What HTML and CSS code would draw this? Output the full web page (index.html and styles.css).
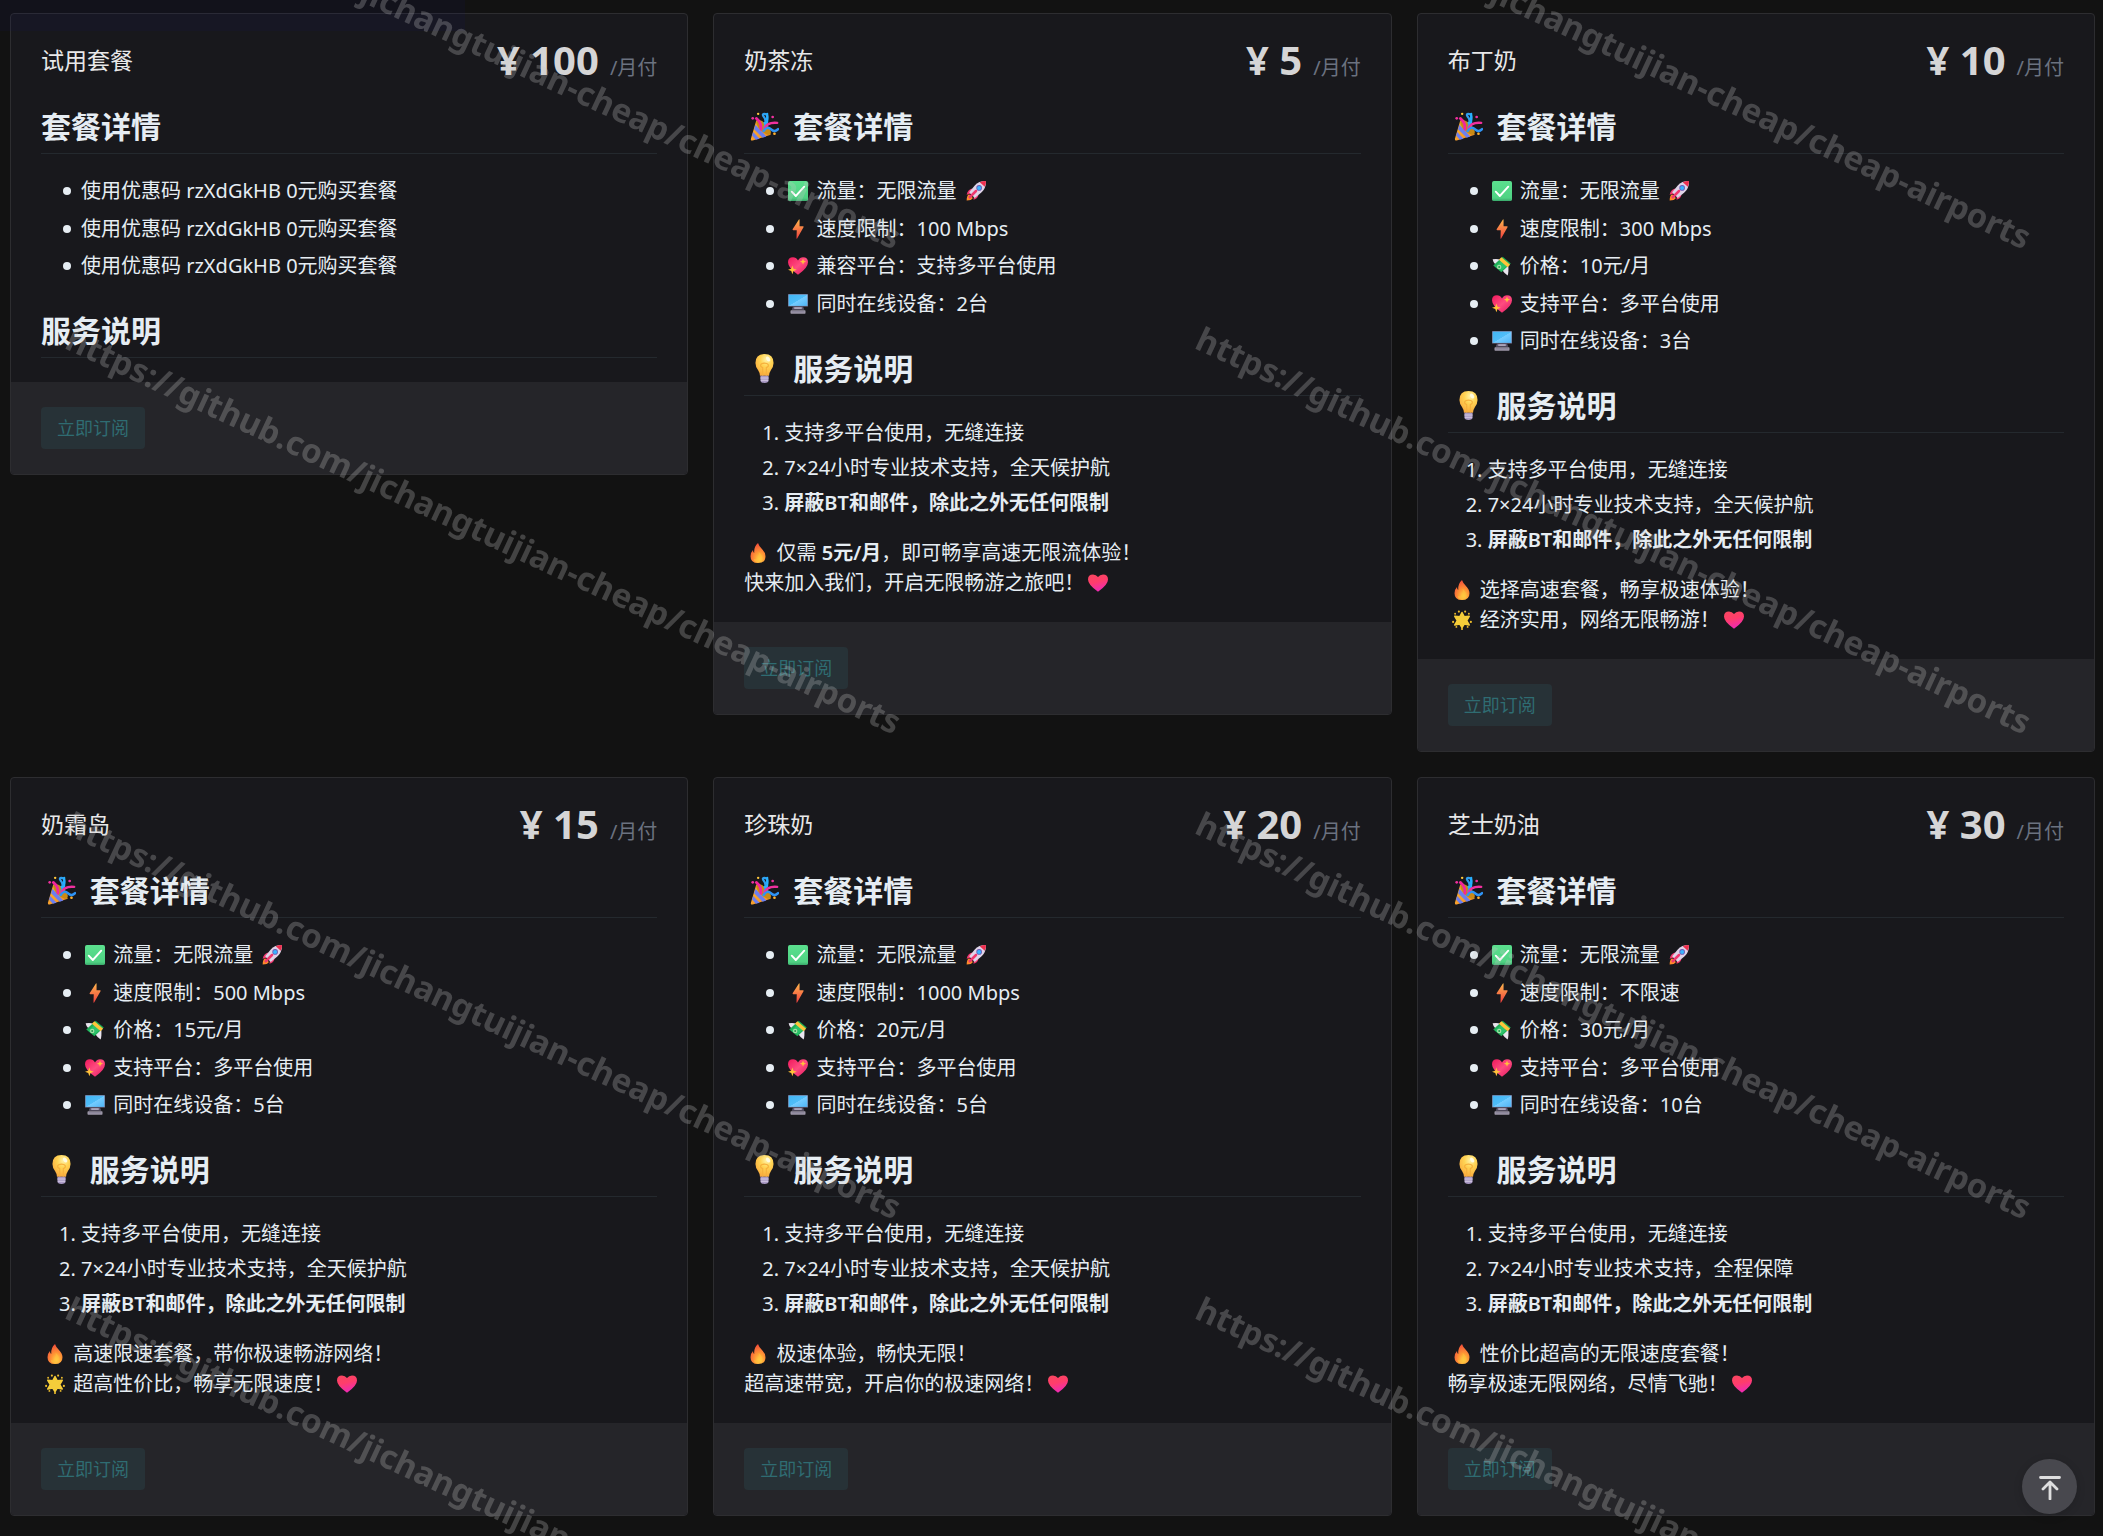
FILE: index.html
```html
<!DOCTYPE html>
<html lang="zh-CN">
<head>
<meta charset="utf-8">
<meta name="viewport" content="width=device-width, initial-scale=1">
<title>购买订阅</title>
<link rel="stylesheet" href="styles.css">
</head>
<body>
<svg class="sprite" aria-hidden="true">
  <defs>
    <linearGradient id="g-check" x1="0" y1="0" x2="0" y2="1"><stop offset="0" stop-color="#5be08e"/><stop offset=".85" stop-color="#4fd283"/><stop offset="1" stop-color="#3aa86b"/></linearGradient>
    <linearGradient id="g-bolt" x1="0" y1="0" x2="0" y2="1"><stop offset="0" stop-color="#ffb84d"/><stop offset="1" stop-color="#f03e3e"/></linearGradient>
    <linearGradient id="g-heart" x1="0" y1="0" x2=".3" y2="1"><stop offset="0" stop-color="#f8475f"/><stop offset=".5" stop-color="#ff3d6b"/><stop offset="1" stop-color="#f02bb0"/></linearGradient>
    <linearGradient id="g-spark" x1="0" y1="0" x2="1" y2="1"><stop offset="0" stop-color="#f0185c"/><stop offset=".5" stop-color="#ff4c80"/><stop offset="1" stop-color="#e01560"/></linearGradient>
    <linearGradient id="g-screen" x1="0" y1="0" x2="1" y2="1"><stop offset="0" stop-color="#41b6f5"/><stop offset=".5" stop-color="#50bdf8"/><stop offset=".52" stop-color="#74ccff"/><stop offset="1" stop-color="#4fb4f5"/></linearGradient>
    <radialGradient id="g-bulb" cx=".6" cy=".25" r=".8"><stop offset="0" stop-color="#fff3a8"/><stop offset=".4" stop-color="#ffd454"/><stop offset="1" stop-color="#f9a63a"/></radialGradient>
    <radialGradient id="g-fire" cx=".6" cy=".8" r=".8"><stop offset="0" stop-color="#ffd84a"/><stop offset=".4" stop-color="#ff9a35"/><stop offset="1" stop-color="#f1493a"/></radialGradient>
    <linearGradient id="g-cone" x1="0" y1="0" x2="1" y2="1"><stop offset="0" stop-color="#ffb52e"/><stop offset="1" stop-color="#f08a2a"/></linearGradient>
  </defs>
  <symbol id="i-party" viewBox="0 0 32 32">
    <path d="M7 9 23 25 3 31.500Q.5 32 1 29.500Z" fill="url(#g-cone)"/>
    <path d="m6 14 12 13-4 1.500L4.500 19zM3.500 22l7 7.500-4 1.200L2.300 26z" fill="#6b7ff0"/>
    <ellipse cx="15" cy="17" rx="10.500" ry="4.500" transform="rotate(45 15 17)" fill="#c98a16"/>
    <path d="M16 17Q19 9 15 5q-2-3 1-3 4 0 3 6" fill="none" stroke="#2fa0f0" stroke-width="2.500" stroke-linecap="round"/>
    <path d="M19 2v8q0 3-3 2" fill="none" stroke="#27b0ff" stroke-width="2.400" stroke-linecap="round"/>
    <path d="M12 19Q13 12 7 7" fill="none" stroke="#f2249c" stroke-width="3" stroke-linecap="round"/>
    <path d="M16 18q3-7 14-6" fill="none" stroke="#f0309f" stroke-width="2.600" stroke-linecap="round"/>
    <path d="M15 21q4-6 8-2t8 0" fill="none" stroke="#2f93f4" stroke-width="2.800" stroke-linecap="round"/>
    <circle cx="3" cy="7" r="1.500" fill="#f0309f"/><circle cx="9" cy="2" r="1.300" fill="#ffc83d"/><circle cx="25" cy="5.500" r="1.500" fill="#f0309f"/><circle cx="27" cy="24" r="1.500" fill="#ffb02e"/>
  </symbol>
  <symbol id="i-check" viewBox="0 0 32 32">
    <rect width="32" height="32" rx="3" fill="url(#g-check)"/>
    <path d="m6 17 6.500 7L26 9" fill="none" stroke="#fff" stroke-width="3" stroke-linecap="round" stroke-linejoin="round"/>
  </symbol>
  <symbol id="i-rocket" viewBox="0 0 32 32">
    <path d="M1 31q0-8 4-10l6 6q-2 4-10 4z" fill="#ff8a2b"/>
    <path d="M10 12q-7 1-9 10l7-2zM20 22q-1 6-8 8l1-8z" fill="#f0386f"/>
    <path d="M32 0q0 12-7 18l-11 9-9-9 9-11Q20 0 32 0z" fill="#dfd3e8"/>
    <path d="M32 0q0 5-2 9l-8-7q4-2 10-2z" fill="#ef2f4f"/>
    <circle cx="21" cy="11" r="4.500" fill="#6b5bb5"/><circle cx="21" cy="11" r="3.200" fill="#38b4ff"/>
    <path d="m6 26 10-10" stroke="#f0386f" stroke-width="4" stroke-linecap="round"/>
  </symbol>
  <symbol id="i-bolt" viewBox="0 0 32 32">
    <path d="M17.500.8q1-1.200 1 .8v10H24q1.600.2.800 1.600L14.600 31.200q-1.200 1.200-1-.8L14 18H8.500Q6.800 17.800 7.600 16z" fill="url(#g-bolt)"/>
  </symbol>
  <symbol id="i-sparkheart" viewBox="0 0 32 32">
    <path d="M16 30Q0 19 0 10 0 2 8 2q5 0 8 5 3-5 8-5 8 0 8 8 0 9-16 20z" fill="url(#g-spark)"/>
    <path d="m7 15 1.800 5.200L14 22l-5.200 1.800L7 29l-1.800-5.200L0 22l5.200-1.800zM24 4l1.400 3.600L29 9l-3.600 1.400L24 14l-1.400-3.600L19 9l3.600-1.400z" fill="#ffc23a"/>
  </symbol>
  <symbol id="i-money" viewBox="0 0 32 32">
    <path d="M1 5q9-1 12 1l-3 8Q3 14 1 5z" fill="#e9e4ee"/>
    <path d="M26 14q1 12-1 17-6-4-9-9z" fill="#e9e4ee"/>
    <path d="M2 15 17 1l13 11-15 14z" fill="#1fae57"/><path d="m5 17 13-12 9 8-12 10z" fill="#2cc36b"/>
    <circle cx="11.500" cy="17.500" r="3.500" fill="#a8e0a8"/><circle cx="11.500" cy="17.500" r="1.600" fill="#1f9a4e"/>
    <path d="m11 6 4-4 14 12-4 4z" fill="#ffc43a"/>
  </symbol>
  <symbol id="i-desktop" viewBox="0 0 32 32">
    <rect x="0" y="0" width="32" height="20" rx="1" fill="#7a6f8c"/><rect x="1" y="1" width="30" height="18" fill="url(#g-screen)"/>
    <path d="M8 20h16l2 5H6z" fill="#5f5870"/><path d="M10 21h12v3H10z" fill="#aaa3b8"/>
    <rect x="4" y="26" width="24" height="5.500" rx="1" fill="#9d97a8"/><path d="M6 28.500h20" stroke="#77708a" stroke-width="1"/>
  </symbol>
  <symbol id="i-bulb" viewBox="0 0 32 32">
    <path d="M16 0q10 0 10 10 0 4-3 8-2 3-2 6H11q0-3-2-6-3-4-3-8Q6 0 16 0z" fill="url(#g-bulb)"/>
    <path d="M14 24v-9q-3-1-2-3.500 1-1.500 4-1.500t4 1.500q1 2.500-2 3.500v9" fill="none" stroke="#f6b03c" stroke-width="1.300"/>
    <path d="M11.500 24h9v5q0 3-4.500 3t-4.500-3z" fill="#a999c4"/><path d="M11.500 26.500h9M12 29h8" stroke="#d9cfe8" stroke-width="1"/>
    <ellipse cx="20" cy="5.500" rx="2" ry="3" transform="rotate(-35 20 5.500)" fill="#fffbe0"/>
  </symbol>
  <symbol id="i-fire" viewBox="0 0 32 32">
    <path d="M16 0q1 4 6 9 6 6 6 12 0 11-12 11T4 21q0-6 4-10 0 4 2 5Q9 6 16 0z" fill="url(#g-fire)"/>
    <path d="M17 14q6 6 6 11 0 6-7 6-6 0-7-6 3 2 5 0 4-4 3-11z" fill="#ffc23c" opacity=".6"/>
  </symbol>
  <symbol id="i-star" viewBox="0 0 32 32">
    <path d="m16 4 3.500 7 8-1-4 7 4 7-8-1.500L16 28l-3.500-5.500-8 1.500 4-7-4-7 8 1z" fill="#f5cd3a" stroke="#f5cd3a" stroke-width="2.500" stroke-linejoin="round"/>
    <g fill="#eebd2c"><circle cx="11" cy="2.500" r="1.700"/><circle cx="21" cy="2.500" r="1.700"/><circle cx="1.800" cy="19" r="1.700"/><circle cx="30.200" cy="19" r="1.700"/><circle cx="16" cy="30.300" r="1.700"/><circle cx="5" cy="6" r="1.500"/><circle cx="27" cy="6" r="1.500"/><circle cx="7" cy="27" r="1.500"/><circle cx="25" cy="27" r="1.500"/></g>
  </symbol>
  <symbol id="i-heart" viewBox="0 0 32 32">
    <path d="M16 30Q0 19 0 10.500 0 2.500 8 2.500q5 0 8 4 3-4 8-4 8 0 8 8Q32 19 16 30z" fill="url(#g-heart)"/>
  </symbol>
</svg>

<main class="plans">
  <article class="card">
    <header class="card-head"><span class="name">试用套餐</span><div class="cost"><strong class="price">¥ 100</strong><span class="period">/月付</span></div></header>
    <section class="detail">
      <h2>套餐详情</h2>
      <ul>
        <li>使用优惠码 rzXdGkHB 0元购买套餐</li>
        <li>使用优惠码 rzXdGkHB 0元购买套餐</li>
        <li>使用优惠码 rzXdGkHB 0元购买套餐</li>
      </ul>
      <h2>服务说明</h2>
    </section>
    <footer class="card-foot"><button class="buy" type="button" disabled>立即订阅</button></footer>
  </article>

  <article class="card">
    <header class="card-head"><span class="name">奶茶冻</span><div class="cost"><strong class="price">¥ 5</strong><span class="period">/月付</span></div></header>
    <section class="detail">
      <h2><svg class="emoji"><use href="#i-party"/></svg> 套餐详情</h2>
      <ul>
        <li><svg class="emoji"><use href="#i-check"/></svg> 流量：无限流量 <svg class="emoji"><use href="#i-rocket"/></svg></li>
        <li><svg class="emoji"><use href="#i-bolt"/></svg> 速度限制：100 Mbps</li>
        <li><svg class="emoji"><use href="#i-sparkheart"/></svg> 兼容平台：支持多平台使用</li>
        <li><svg class="emoji"><use href="#i-desktop"/></svg> 同时在线设备：2台</li>
      </ul>
      <h2><svg class="emoji"><use href="#i-bulb"/></svg> 服务说明</h2>
      <ol>
        <li>支持多平台使用，无缝连接</li>
        <li>7×24小时专业技术支持，全天候护航</li>
        <li><strong>屏蔽BT和邮件，除此之外无任何限制</strong></li>
      </ol>
      <p><svg class="emoji"><use href="#i-fire"/></svg> 仅需 <strong>5元/月</strong>，即可畅享高速无限流体验！<br>快来加入我们，开启无限畅游之旅吧！<svg class="emoji"><use href="#i-heart"/></svg></p>
    </section>
    <footer class="card-foot"><button class="buy" type="button" disabled>立即订阅</button></footer>
  </article>

  <article class="card">
    <header class="card-head"><span class="name">布丁奶</span><div class="cost"><strong class="price">¥ 10</strong><span class="period">/月付</span></div></header>
    <section class="detail">
      <h2><svg class="emoji"><use href="#i-party"/></svg> 套餐详情</h2>
      <ul>
        <li><svg class="emoji"><use href="#i-check"/></svg> 流量：无限流量 <svg class="emoji"><use href="#i-rocket"/></svg></li>
        <li><svg class="emoji"><use href="#i-bolt"/></svg> 速度限制：300 Mbps</li>
        <li><svg class="emoji"><use href="#i-money"/></svg> 价格：10元/月</li>
        <li><svg class="emoji"><use href="#i-sparkheart"/></svg> 支持平台：多平台使用</li>
        <li><svg class="emoji"><use href="#i-desktop"/></svg> 同时在线设备：3台</li>
      </ul>
      <h2><svg class="emoji"><use href="#i-bulb"/></svg> 服务说明</h2>
      <ol>
        <li>支持多平台使用，无缝连接</li>
        <li>7×24小时专业技术支持，全天候护航</li>
        <li><strong>屏蔽BT和邮件，除此之外无任何限制</strong></li>
      </ol>
      <p><svg class="emoji"><use href="#i-fire"/></svg> 选择高速套餐，畅享极速体验！<br><svg class="emoji"><use href="#i-star"/></svg> 经济实用，网络无限畅游！<svg class="emoji"><use href="#i-heart"/></svg></p>
    </section>
    <footer class="card-foot"><button class="buy" type="button" disabled>立即订阅</button></footer>
  </article>

  <article class="card">
    <header class="card-head"><span class="name">奶霜岛</span><div class="cost"><strong class="price">¥ 15</strong><span class="period">/月付</span></div></header>
    <section class="detail">
      <h2><svg class="emoji"><use href="#i-party"/></svg> 套餐详情</h2>
      <ul>
        <li><svg class="emoji"><use href="#i-check"/></svg> 流量：无限流量 <svg class="emoji"><use href="#i-rocket"/></svg></li>
        <li><svg class="emoji"><use href="#i-bolt"/></svg> 速度限制：500 Mbps</li>
        <li><svg class="emoji"><use href="#i-money"/></svg> 价格：15元/月</li>
        <li><svg class="emoji"><use href="#i-sparkheart"/></svg> 支持平台：多平台使用</li>
        <li><svg class="emoji"><use href="#i-desktop"/></svg> 同时在线设备：5台</li>
      </ul>
      <h2><svg class="emoji"><use href="#i-bulb"/></svg> 服务说明</h2>
      <ol>
        <li>支持多平台使用，无缝连接</li>
        <li>7×24小时专业技术支持，全天候护航</li>
        <li><strong>屏蔽BT和邮件，除此之外无任何限制</strong></li>
      </ol>
      <p><svg class="emoji"><use href="#i-fire"/></svg> 高速限速套餐，带你极速畅游网络！<br><svg class="emoji"><use href="#i-star"/></svg> 超高性价比，畅享无限速度！<svg class="emoji"><use href="#i-heart"/></svg></p>
    </section>
    <footer class="card-foot"><button class="buy" type="button" disabled>立即订阅</button></footer>
  </article>

  <article class="card">
    <header class="card-head"><span class="name">珍珠奶</span><div class="cost"><strong class="price">¥ 20</strong><span class="period">/月付</span></div></header>
    <section class="detail">
      <h2><svg class="emoji"><use href="#i-party"/></svg> 套餐详情</h2>
      <ul>
        <li><svg class="emoji"><use href="#i-check"/></svg> 流量：无限流量 <svg class="emoji"><use href="#i-rocket"/></svg></li>
        <li><svg class="emoji"><use href="#i-bolt"/></svg> 速度限制：1000 Mbps</li>
        <li><svg class="emoji"><use href="#i-money"/></svg> 价格：20元/月</li>
        <li><svg class="emoji"><use href="#i-sparkheart"/></svg> 支持平台：多平台使用</li>
        <li><svg class="emoji"><use href="#i-desktop"/></svg> 同时在线设备：5台</li>
      </ul>
      <h2><svg class="emoji"><use href="#i-bulb"/></svg> 服务说明</h2>
      <ol>
        <li>支持多平台使用，无缝连接</li>
        <li>7×24小时专业技术支持，全天候护航</li>
        <li><strong>屏蔽BT和邮件，除此之外无任何限制</strong></li>
      </ol>
      <p><svg class="emoji"><use href="#i-fire"/></svg> 极速体验，畅快无限！<br>超高速带宽，开启你的极速网络！<svg class="emoji"><use href="#i-heart"/></svg></p>
    </section>
    <footer class="card-foot"><button class="buy" type="button" disabled>立即订阅</button></footer>
  </article>

  <article class="card">
    <header class="card-head"><span class="name">芝士奶油</span><div class="cost"><strong class="price">¥ 30</strong><span class="period">/月付</span></div></header>
    <section class="detail">
      <h2><svg class="emoji"><use href="#i-party"/></svg> 套餐详情</h2>
      <ul>
        <li><svg class="emoji"><use href="#i-check"/></svg> 流量：无限流量 <svg class="emoji"><use href="#i-rocket"/></svg></li>
        <li><svg class="emoji"><use href="#i-bolt"/></svg> 速度限制：不限速</li>
        <li><svg class="emoji"><use href="#i-money"/></svg> 价格：30元/月</li>
        <li><svg class="emoji"><use href="#i-sparkheart"/></svg> 支持平台：多平台使用</li>
        <li><svg class="emoji"><use href="#i-desktop"/></svg> 同时在线设备：10台</li>
      </ul>
      <h2><svg class="emoji"><use href="#i-bulb"/></svg> 服务说明</h2>
      <ol>
        <li>支持多平台使用，无缝连接</li>
        <li>7×24小时专业技术支持，全程保障</li>
        <li><strong>屏蔽BT和邮件，除此之外无任何限制</strong></li>
      </ol>
      <p><svg class="emoji"><use href="#i-fire"/></svg> 性价比超高的无限速度套餐！<br>畅享极速无限网络，尽情飞驰！<svg class="emoji"><use href="#i-heart"/></svg></p>
    </section>
    <footer class="card-foot"><button class="buy" type="button" disabled>立即订阅</button></footer>
  </article>
</main>

<div class="tint"></div>
<div class="watermark" aria-hidden="true">
  <div><span>https://github.com/jichangtuijian-cheap/cheap-airports</span></div>
  <div><span>https://github.com/jichangtuijian-cheap/cheap-airports</span></div>
  <div><span>https://github.com/jichangtuijian-cheap/cheap-airports</span></div>
  <div><span>https://github.com/jichangtuijian-cheap/cheap-airports</span></div>
  <div><span>https://github.com/jichangtuijian-cheap/cheap-airports</span></div>
  <div><span>https://github.com/jichangtuijian-cheap/cheap-airports</span></div>
  <div><span>https://github.com/jichangtuijian-cheap/cheap-airports</span></div>
  <div><span>https://github.com/jichangtuijian-cheap/cheap-airports</span></div>
</div>
<button class="back-top" type="button" aria-label="回到顶部">
  <svg viewBox="0 0 26 26"><path d="M3.500 3.500h19M13 25V8.500M6 15l7-7 7 7" fill="none" stroke="#dededf" stroke-width="2.800" stroke-linecap="round" stroke-linejoin="round"/></svg>
</button>
</body>
</html>
```
FILE: styles.css
```css
* { box-sizing: border-box; }
body {
  margin: 0;
  background: #121212;
  color: #e6edf3;
  font: 20px/30px "Noto Sans", "Noto Sans CJK SC", sans-serif;
}
.sprite { position: absolute; width: 0; height: 0; }

.plans {
  display: grid;
  grid-template-columns: repeat(3, minmax(0, 1fr));
  align-items: start;
  gap: 25px;
  padding: 13px 8px 17px 10px;
}
.card {
  background: #18181c;
  border: 1px solid #2d2d30;
  border-radius: 4px;
  overflow: hidden;
}
.card-head {
  display: flex;
  justify-content: space-between;
  align-items: center;
  padding: 26px 30px 28px;
  line-height: 40px;
}
.name { font-size: 23px; color: #e8e8e9; }
.cost { display: flex; align-items: baseline; gap: 11px; }
.price { font-size: 40px; font-weight: 700; color: #d5d5d6; }
.period { line-height: 20px; color: #6b7280; }

.detail { padding: 0 30px 24px; }
h2 {
  margin: 0;
  padding-bottom: 7px;
  border-bottom: 1px solid #24292e;
  font-size: 30px;
  line-height: 38px;
}
ul + h2 { margin-top: 31px; }
ul, ol { margin: 22px 0 0; padding-left: 40px; }
ul { list-style: none; }
ul li::before {
  content: "";
  display: inline-block;
  width: 8px;
  height: 8px;
  margin: 0 10px 0 -18px;
  border-radius: 50%;
  background: currentColor;
  vertical-align: 3px;
}
ul li + li { margin-top: 7px; }
ul li:nth-child(even) { margin-top: 8px; }
ol li + li { margin-top: 5px; }
p { margin: 20px 0 0; }
strong { font-weight: 600; }

.emoji {
  width: 20px;
  height: 20px;
  margin: 0 3px 0 4px;
  vertical-align: -3px;
}
h2 .emoji {
  width: 29px;
  height: 29px;
  margin: 0 6px;
  vertical-align: -3px;
}

.card-foot { padding: 25px 30px; background: #252529; }
.buy {
  display: block;
  height: 42px;
  padding: 0 16px;
  border: 0;
  border-radius: 4px;
  background: #273237;
  color: #2f6c72;
  font: inherit;
  font-size: 18px;
}

.tint {
  position: fixed;
  top: 0;
  left: 0;
  width: 465px;
  height: 31px;
  background: rgba(20, 20, 110, .1);
  pointer-events: none;
}
.watermark {
  position: fixed;
  inset: -185px 0 0;
  display: grid;
  grid-template: repeat(4, 485px) / repeat(2, 1130px);
  overflow: hidden;
  pointer-events: none;
}
.watermark div { padding: 16px 0 0 78px; }
.watermark span {
  display: block;
  width: max-content;
  font-size: 33px;
  font-weight: 700;
  line-height: 45px;
  color: rgba(200, 200, 200, .27);
  transform: rotate(25deg);
  transform-origin: 0 0;
}
.back-top {
  position: fixed;
  right: 26px;
  bottom: 22px;
  display: grid;
  place-items: center;
  width: 55px;
  height: 55px;
  padding: 0;
  border: 0;
  border-radius: 50%;
  background: #48484e;
  box-shadow: 0 2px 10px rgba(0, 0, 0, .14);
}
.back-top svg { width: 26px; height: 26px; }
```
